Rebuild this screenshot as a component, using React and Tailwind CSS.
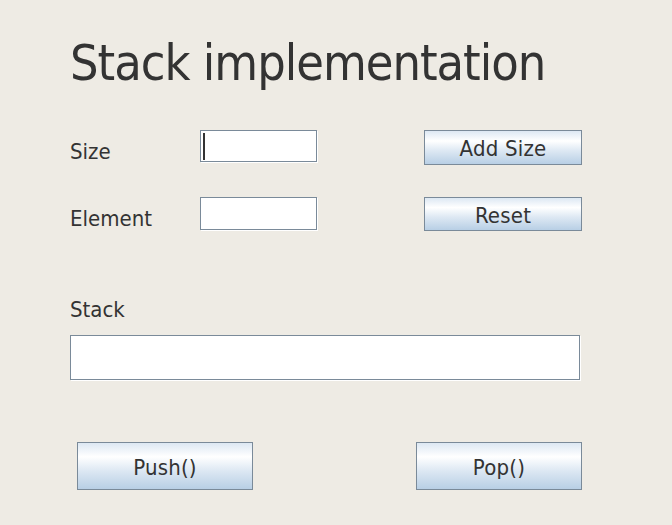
import React from "react";

const btnClass =
  "flex items-center justify-center pt-[2px] border border-[#7a8a99] bg-[linear-gradient(to_bottom,#dde8f3_0%,#ffffff_30%,#dde8f3_60%,#b8cfe5_100%)] text-[22px] font-stretch-condensed tracking-[0.2px] text-[#333333]";

const fieldClass =
  "flex items-center bg-white border border-[#7a8a99] shadow-[1px_1px_0_#ffffff]";

const labelClass = "text-[22px] leading-[25px] font-stretch-condensed";

const App = () => {
  return (
    <div className="min-h-screen bg-[#eeebe4] font-['DejaVu_Sans',sans-serif] text-[#333333]">
      <div className="pl-[70px] pt-[33px] pb-[35px]">
        {/* Title */}
        <h1 className="text-[50px] leading-[60px] font-stretch-condensed tracking-[-1px] whitespace-nowrap">
          Stack implementation
        </h1>

        {/* Size row */}
        <div className="flex items-start mt-[37px] h-[35px]">
          <div className={`${labelClass} w-[130px] mt-[9px]`}>Size</div>
          <div className={`${fieldClass} w-[117px] h-[32px] pl-[2px]`}>
            <span className="w-[2px] h-[27px] bg-[#333333]" />
          </div>
          <button type="button" className={`${btnClass} ml-[107px] w-[158px] h-[35px]`}>
            Add Size
          </button>
        </div>

        {/* Element row */}
        <div className="flex items-start mt-[32px] h-[34px]">
          <div className={`${labelClass} w-[130px] mt-[9px]`}>Element</div>
          <div className={`${fieldClass} w-[117px] h-[33px]`} />
          <button type="button" className={`${btnClass} ml-[107px] w-[158px] h-[34px]`}>
            Reset
          </button>
        </div>

        {/* Stack output */}
        <div className={`${labelClass} mt-[66px]`}>Stack</div>
        <div className={`${fieldClass} mt-[13px] w-[510px] h-[45px]`} />

        {/* Push / Pop */}
        <div className="flex items-start mt-[62px]">
          <button type="button" className={`${btnClass} ml-[7px] w-[176px] h-[48px]`}>
            Push()
          </button>
          <button type="button" className={`${btnClass} ml-[163px] w-[166px] h-[48px]`}>
            Pop()
          </button>
        </div>
      </div>
    </div>
  );
};

export default App;
